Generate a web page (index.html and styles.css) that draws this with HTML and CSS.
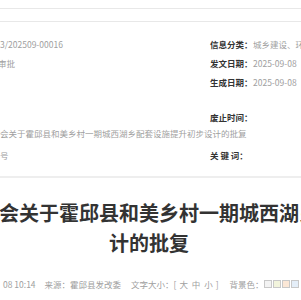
FILE: index.html
```html
<!DOCTYPE html>
<html lang="zh-CN">
<head>
  <meta charset="UTF-8">
  <title>关于霍邱县和美乡村一期城西湖乡配套设施提升初步设计的批复</title>
  <link rel="stylesheet" href="styles.css">
</head>
<body>

  <!-- 面包屑条 -->
  <div class="crumb-bar"></div>

  <!-- 信息公开表 -->
  <div class="info">
    <div class="val">3/202509-00016</div>
    <div class="lab">信息分类：</div>
    <div class="val">城乡建设、环境保护</div>

    <div class="val cut">审批</div>
    <div class="lab">发文日期：</div>
    <div class="val">2025-09-08</div>

    <div class="val"></div>
    <div class="lab">生成日期：</div>
    <div class="val">2025-09-08</div>

    <div class="val"></div>
    <div class="lab"></div>
    <div class="val"></div>

    <div class="val"></div>
    <div class="lab">废止时间：</div>
    <div class="val"></div>

    <div class="val wide">会关于霍邱县和美乡村一期城西湖乡配套设施提升初步设计的批复</div>

    <div class="val">号</div>
    <div class="lab spaced">关 键 词：</div>
    <div class="val"></div>
  </div>

  <!-- 标题 -->
  <h1 class="title">霍邱县发展和改革委员会关于霍邱县和美乡村一期城西湖乡配套设施提升初步设计的批复</h1>

  <!-- 发布信息 -->
  <div class="meta">
    <span class="date">08 10:14</span>
    <span class="source">来源：霍邱县发改委</span>
    <span class="size">文字大小：[ <a>大</a> <a>中</a> <a>小</a> ]</span>
    <span class="bg">背景色：<i class="c1"></i><i class="c2"></i><i class="c3"></i><i class="c4"></i></span>
  </div>

</body>
</html>
```

FILE: styles.css
```css
body {
  margin: 0;
  font-family: "Noto Sans CJK SC", "Microsoft YaHei", sans-serif;
  background: #fff;
  overflow: hidden;
  color: #333;
}

.crumb-bar {
  margin-top: 8px;
  height: 12px;
  border-top: 1px solid #e8e8e8;
  border-bottom: 1px solid #e8e8e8;
}

.info {
  display: grid;
  grid-template-columns: 210px 43px 1fr;
  grid-template-rows: 19px 19px 19px 17px 18px 14px 30px;
  margin-top: 12px;
  border-bottom: 2px solid #eeeeee;
  padding-bottom: 6px;
  font-size: 8.5px;
  white-space: nowrap;
  overflow: hidden;
}

.info > div {
  display: flex;
  align-items: center;
}

.lab {
  color: #333;
  font-weight: bold;
}

.val {
  color: #a0a0a0;
}

.cut {
  margin-left: -2px;
}

.wide {
  grid-column: 1 / 4;
}

.title {
  width: 706px;
  margin: 20px 0 0 -204px;
  font-size: 20px;
  line-height: 30px;
  font-weight: bold;
  text-align: center;
  color: #333;
}

.meta {
  display: flex;
  align-items: center;
  margin-top: 20px;
  padding-left: 3px;
  height: 12px;
  font-size: 8.5px;
  color: #a0a0a0;
  white-space: nowrap;
}

.source {
  margin-left: 9px;
}

.size {
  margin-left: 10px;
}

.size a {
  margin: 0 1px;
}

.bg {
  margin-left: 11px;
  display: flex;
  align-items: center;
}

.bg i {
  display: inline-block;
  width: 6px;
  height: 6px;
  border: 1px solid #c8c8c8;
  margin-right: 1px;
}

.c1 { background: #f3f3f3; }
.c2 { background: #f2f4dc; }
.c3 { background: #fbe7d6; }
.c4 { background: #e4eef8; }
```
